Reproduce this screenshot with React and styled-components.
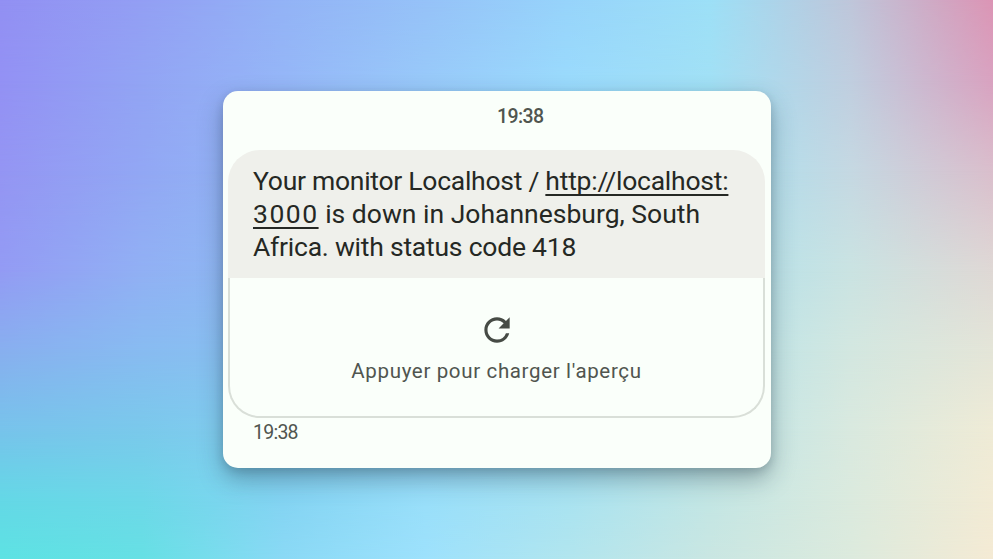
import React from "react";
import styled, { createGlobalStyle } from "styled-components";
import { MdRefresh } from "react-icons/md";

const GlobalStyle = createGlobalStyle`
  * { box-sizing: border-box; }
  body { margin: 0; overflow: hidden; }
`;

// Each band is a horizontal colour ramp that fades in between two heights,
// so the stack reads as one smooth mesh gradient.
const bands = [
  { y: 0, colors: ["#9290f3", "#939ff4", "#93b3f6", "#96c2f8", "#97d4fb", "#9de0f7", "#bfc6da", "#dc95b5"] },
  { y: 80, colors: ["#9391f4", "#92a4f4", "#95b6f7", "#98c9f9", "#9adafc", "#a1e0f5", "#c0cedf", "#d9a2c0"] },
  { y: 170, colors: ["#9495f3", "#92a7f4", "#93b8f5", "#97ccf9", "#9adcfb", "#a6e1f1", "#c5d8e2", "#dabecc"] },
  { y: 270, colors: ["#939bf4", "#91b0f4", "#8ebcf3", "#96cdf8", "#9bdcf9", "#b0e1ec", "#cae3e2", "#dfd8d5"] },
  { y: 350, colors: ["#88afef", "#88bbf1", "#89c2f1", "#93d1f7", "#9bdff9", "#b6e3ea", "#d3e7e0", "#e4e5d8"] },
  { y: 430, colors: ["#77c3eb", "#7ac9eb", "#84cef1", "#94d7f8", "#a0e0f5", "#bce5e8", "#d9e9df", "#efebd6"] },
  { y: 500, colors: ["#64d8e6", "#6dd8e8", "#84d4f3", "#99dffa", "#a9e3f1", "#c3e6e4", "#dbeade", "#f2ebd5"] },
  { y: 559, colors: ["#5de2e3", "#66e0e4", "#8ad9f5", "#9de1fc", "#b1e5ee", "#c9e6e2", "#dceadd", "#f4ead4"] },
];

const Stage = styled.main`
  position: relative;
  isolation: isolate;
  width: 993px;
  height: 559px;
  overflow: hidden;
  padding: 91px 0 0 223px;
  font-family: Roboto, "Liberation Sans", sans-serif;
`;

const Band = styled.div`
  position: absolute;
  inset: 0;
  z-index: -1;
  background: linear-gradient(90deg, ${(p) => p.$colors.join(", ")});
  mask-image: ${(p) =>
    p.$to ? `linear-gradient(to bottom, transparent ${p.$from}px, black ${p.$to}px)` : "none"};
`;

const Card = styled.section`
  width: 547.5px;
  height: 377px;
  border-radius: 15px;
  background: #fafffa;
  padding: 0 5px;
  box-shadow: 0 11px 24px rgba(25, 45, 60, 0.34), 0 3px 8px rgba(25, 45, 60, 0.16);
`;

const DateLabel = styled.time`
  display: block;
  height: 59px;
  padding: 15px 0 0 269px;
  font-size: 19.5px;
  line-height: 22px;
  font-weight: 500;
  letter-spacing: -0.6px;
  color: #50554f;
`;

const Bubble = styled.article`
  width: 537px;
`;

const Message = styled.p`
  margin: 0;
  height: 128px;
  padding: 14px 25px 0;
  border-radius: 32px 32px 0 0;
  background: #eff0eb;
  color: #252824;
  font-size: 26.5px;
  line-height: 33px;
  white-space: nowrap;
`;

const Line = styled.span`
  display: block;
  letter-spacing: ${(p) => p.$tracking}px;
`;

const Link = styled.a`
  color: inherit;
  letter-spacing: ${(p) => p.$tracking}px;
  text-decoration: underline;
  text-decoration-thickness: 2px;
  text-decoration-skip-ink: none;
  text-underline-offset: 4px;
`;

const Preview = styled.div`
  display: flex;
  flex-direction: column;
  align-items: center;
  height: 140px;
  padding-top: 33px;
  border: 2px solid #d9dfd8;
  border-top: 0;
  border-radius: 0 0 32px 32px;
  color: #464b45;
`;

const PreviewText = styled.span`
  margin-top: 10px;
  font-size: 20.5px;
  line-height: 24px;
  letter-spacing: 0.65px;
  color: #50554f;
`;

const SentTime = styled.time`
  display: block;
  padding: 3px 0 0 25px;
  font-size: 19.5px;
  line-height: 24px;
  letter-spacing: -0.75px;
  color: #50554f;
`;

export default function App() {
  return (
    <Stage>
      <GlobalStyle />
      {bands.map((b, i) => (
        <Band key={b.y} $colors={b.colors} $from={i ? bands[i - 1].y : 0} $to={b.y} />
      ))}
      <Card>
        <DateLabel>19:38</DateLabel>
        <Bubble>
          <Message>
            <Line $tracking={-0.27}>
              Your monitor Localhost / <Link $tracking={-0.23}>http://localhost:</Link>
            </Line>
            <Line $tracking={0}>
              <Link $tracking={1.5}>3000</Link> is down in Johannesburg, South
            </Line>
            <Line $tracking={-0.23}>Africa. with status code 418</Line>
          </Message>
          <Preview>
            <MdRefresh size={38} />
            <PreviewText>Appuyer pour charger l'aperçu</PreviewText>
          </Preview>
        </Bubble>
        <SentTime>19:38</SentTime>
      </Card>
    </Stage>
  );
}
